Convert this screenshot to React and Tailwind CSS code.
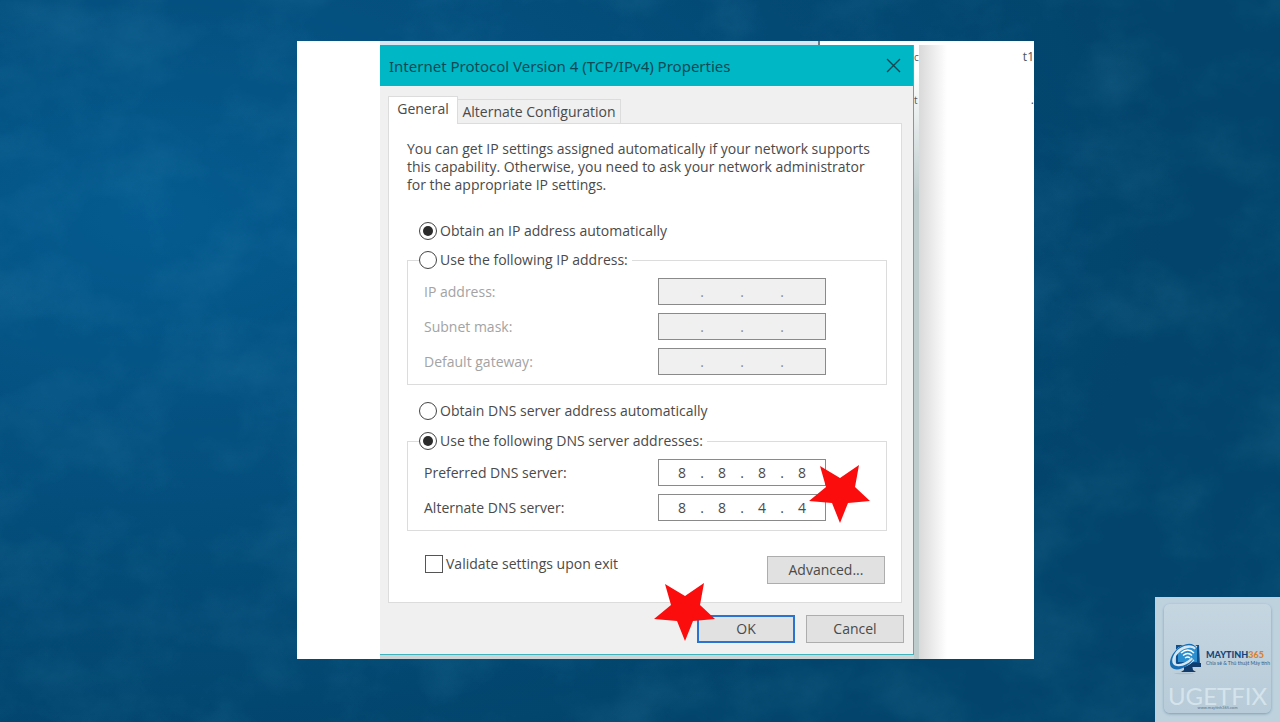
import React, { useState } from 'react';
import clsx from 'clsx';

const IpField = ({ id, value, disabled, onChange }) => (
    <div
        role="group"
        aria-labelledby={`${id}-label`}
        className={clsx(
            "flex items-center w-[168px] h-[27px] pl-2 border border-[#8a8a8a]",
            disabled ? "bg-[#f0f0f0] text-[#8c8c8c]" : "bg-white text-[#4a4a4a]"
        )}
    >
        {value.map((octet, idx) => (
            <React.Fragment key={idx}>
                {idx > 0 && <span className="w-[10px] text-center">.</span>}
                <input
                    id={`${id}-${idx}`}
                    aria-label={`Octet ${idx + 1}`}
                    className="w-[30px] h-5 p-0 text-center bg-transparent outline-none"
                    maxLength={3}
                    disabled={disabled}
                    value={octet}
                    onChange={e => onChange(value.map((o, i) => (i === idx ? e.target.value : o)))}
                />
            </React.Fragment>
        ))}
    </div>
);

const IpRow = ({ id, label, value, disabled, onChange }) => (
    <div className="flex items-center justify-between pl-4 pr-[60px]">
        <label id={`${id}-label`} htmlFor={`${id}-0`} className={disabled ? "text-[#a3a3a3]" : ""}>{label}</label>
        <IpField id={id} value={value} disabled={disabled} onChange={onChange} />
    </div>
);

const RadioOption = ({ name, label, checked, onChange }) => (
    <label className="flex items-center gap-[3px] h-5">
        <input
            type="radio"
            name={name}
            checked={checked}
            onChange={onChange}
            className="grid place-content-center appearance-none w-[18px] h-[18px] rounded-full border border-[#444] bg-white before:w-[10px] before:h-[10px] before:rounded-full checked:before:bg-[#2b2b2b]"
        />
        {label}
    </label>
);

const Star = ({ className }) => (
    <svg className={clsx("absolute w-[61px] h-[58px]", className)} viewBox="0 0 61 58" aria-hidden="true">
        <polygon fill="#fb0d0d" points="11,1 31,13 50,0 46,22 61,36 39,38 31,58 23,38 0,36 17,22" />
    </svg>
);

const Backdrop = () => (
    <svg className="absolute inset-0 -z-10 w-full h-full" aria-hidden="true">
        <defs>
            <radialGradient id="glow" cx="0.12" cy="0.3" r="0.8">
                <stop offset="0" stopColor="#045b8f" />
                <stop offset="0.4" stopColor="#04507f" />
                <stop offset="1" stopColor="#02446b" />
            </radialGradient>
            <filter id="grain" x="0" y="0" width="100%" height="100%">
                <feTurbulence type="fractalNoise" baseFrequency="0.012 0.015" numOctaves="7" seed="8" />
                <feColorMatrix values="0 0 0 0 0.12  0 0 0 0 0.5  0 0 0 0 0.72  0.9 0 0 0 -0.36" />
            </filter>
        </defs>
        <rect width="100%" height="100%" fill="url(#glow)" />
        <rect width="100%" height="100%" filter="url(#grain)" opacity="0.25" />
    </svg>
);

const LogoMark = () => (
    <svg className="w-[35px] h-[34px] shrink-0" viewBox="0 0 35 34" aria-hidden="true">
        <ellipse cx="15" cy="32.5" rx="10" ry="0.7" fill="#a9bcc8" />
        <path d="M15 24h8l1 5 3 2H12l3-2z" fill="#123c6b" />
        <path d="M7 4h23l1 21H7z" fill="#0f4f8d" />
        <path d="M9 6h19v15H9z" fill="#2c8fd0" />
        <path d="M7 22h25v4H7z" fill="#123c6b" />
        <path d="M12 12q7-6 13 0M14 14.500q5-4 9 0M16 17q3-2 5 0" fill="none" stroke="#fff" strokeWidth="1.4" />
        <path d="M27 7C22 2 11 6 6 13c-4 6-3 12 3 12 4 0 10-2 15-7" fill="none" stroke="#d5e6f0" strokeWidth="4" />
        <path d="M28 8C22 1 11 5 6 12c-4 6-4 12 2 13 5 1 12-2 17-8-4 8-14 13-20 11C-2 26 1 15 7 9 14 2 25 0 28 8z" fill="#176db2" />
    </svg>
);

const Watermark = () => (
    <aside className="absolute right-0 bottom-0 w-[125px] h-[125px] p-[9px] pt-[7px] bg-[#bed2de]">
        <div className="flex flex-col h-[109px] rounded-md bg-linear-to-b from-[#c5d6e1] to-[#b7cbd8] shadow-[0_1px_3px_#7f9bae]">
            <div className="flex items-center gap-[2px] pt-[37px] pl-[5px]">
                <LogoMark />
                <div className="font-[Lato,sans-serif] whitespace-nowrap">
                    <div className="text-[9px] leading-[10px] font-black text-[#14457b]">
                        MAYTINH<span className="text-[#d9822b]">365</span>
                    </div>
                    <div className="text-[5px] leading-[6px] text-[#2c5f8d]">Chia sẻ &amp; Thủ thuật Máy tính</div>
                </div>
            </div>
            <div className="mt-auto text-center font-[Lato,sans-serif]">
                <div className="text-[24px] leading-[20px] text-[#d5e4ec]">UGETFIX</div>
                <div className="text-[4px] leading-[4px] pb-[3px] text-[#5d7484]">www.maytinh365.com</div>
            </div>
        </div>
    </aside>
);

const Dialog = () => {
    const [ipMode, setIpMode] = useState('auto');
    const [dnsMode, setDnsMode] = useState('manual');
    const [validate, setValidate] = useState(false);
    const [addresses, setAddresses] = useState({
        ip: ['', '', '', ''],
        mask: ['', '', '', ''],
        gateway: ['', '', '', ''],
        preferred: ['8', '8', '8', '8'],
        alternate: ['8', '8', '4', '4'],
    });

    const rowProps = (key) => ({
        id: key,
        value: addresses[key],
        onChange: (value) => setAddresses({ ...addresses, [key]: value }),
    });

    return (
        <section className="w-[534px] bg-[#f0f0f0] border-r border-b border-r-[#3fb4bd] border-b-[#3fb4bd] text-[14px] leading-[18px] text-[#4a4a4a]">
            <header className="flex items-center justify-between h-[41px] pl-[9px] pr-3 bg-[#00b7c6] text-[#0b4a55]">
                <h1 className="text-[15px] font-['Noto_Sans',sans-serif]">Internet Protocol Version 4 (TCP/IPv4) Properties</h1>
                <button type="button" aria-label="Close">
                    <svg className="w-4 h-4" viewBox="0 0 16 16" fill="none" stroke="currentColor" strokeWidth="1.4">
                        <path d="M2 1l13 13M15 1L2 14" />
                    </svg>
                </button>
            </header>

            <div className="px-2 pt-[10px] pr-[11px]">
                {/* Tabs */}
                <div role="tablist" className="flex items-end">
                    <button type="button" role="tab" aria-selected="true" className="w-[70px] h-7 -mb-px pb-1 bg-white border border-b-0 border-[#dcdcdc]">General</button>
                    <button type="button" role="tab" aria-selected="false" className="w-[163px] h-6 border border-l-0 border-b-0 border-[#dcdcdc]">Alternate Configuration</button>
                </div>

                <div role="tabpanel" className="px-[18px] pr-[14px] pt-4 pb-[18px] bg-white border border-[#dcdcdc]">
                    <p>
                        You can get IP settings assigned automatically if your network supports<br />
                        this capability. Otherwise, you need to ask your network administrator<br />
                        for the appropriate IP settings.
                    </p>

                    <div className="mt-[27px] pl-3">
                        <RadioOption name="ip" label="Obtain an IP address automatically" checked={ipMode === 'auto'} onChange={() => setIpMode('auto')} />
                    </div>
                    <fieldset className="mt-[9px] pb-[9px] border border-[#dcdcdc]">
                        <legend className="ml-[11px] pr-1">
                            <RadioOption name="ip" label="Use the following IP address:" checked={ipMode === 'manual'} onChange={() => setIpMode('manual')} />
                        </legend>
                        <div className="flex flex-col gap-2 pt-2">
                            <IpRow label="IP address:" disabled={ipMode === 'auto'} {...rowProps('ip')} />
                            <IpRow label="Subnet mask:" disabled={ipMode === 'auto'} {...rowProps('mask')} />
                            <IpRow label="Default gateway:" disabled={ipMode === 'auto'} {...rowProps('gateway')} />
                        </div>
                    </fieldset>

                    <div className="mt-4 pl-3">
                        <RadioOption name="dns" label="Obtain DNS server address automatically" checked={dnsMode === 'auto'} onChange={() => setDnsMode('auto')} />
                    </div>
                    <fieldset className="mt-[10px] pb-[9px] border border-[#dcdcdc]">
                        <legend className="ml-[11px] pr-1">
                            <RadioOption name="dns" label="Use the following DNS server addresses:" checked={dnsMode === 'manual'} onChange={() => setDnsMode('manual')} />
                        </legend>
                        <div className="relative flex flex-col gap-2 pt-2">
                            <IpRow label="Preferred DNS server:" disabled={dnsMode === 'auto'} {...rowProps('preferred')} />
                            <IpRow label="Alternate DNS server:" disabled={dnsMode === 'auto'} {...rowProps('alternate')} />
                            <Star className="right-4 top-[14px]" />
                        </div>
                    </fieldset>

                    <div className="flex items-start justify-between mt-[25px] pl-[18px] pr-[2px]">
                        <label className="flex items-center gap-[3px] h-4">
                            <input
                                type="checkbox"
                                checked={validate}
                                onChange={e => setValidate(e.target.checked)}
                                className="appearance-none w-[18px] h-[18px] border border-[#555] bg-white checked:bg-[#2b2b2b]"
                            />
                            Validate settings upon exit
                        </label>
                        <button type="button" className="w-[118px] h-7 bg-[#e1e1e1] border border-[#adadad]">Advanced...</button>
                    </div>
                </div>
            </div>

            <footer className="flex justify-end gap-[11px] pt-3 pb-[11px] pr-[9px]">
                <div className="relative">
                    <button type="button" className="w-[98px] h-7 bg-[#e1e1e1] border-2 border-[#2a73cf]">OK</button>
                    <Star className="-left-[43px] -top-8" />
                </div>
                <button type="button" className="w-[98px] h-7 bg-[#e1e1e1] border border-[#adadad]">Cancel</button>
            </footer>
        </section>
    );
};

const App = () => (
    <main className="relative isolate flex justify-center items-start min-h-screen pt-[41px] pl-[51px] overflow-hidden bg-[#04507f] font-['Open_Sans',sans-serif]">
        <Backdrop />
        <div className="flex w-full max-w-[737px] pl-[83px] bg-white text-[14px] leading-[18px] text-[#4a5560]">
            <div className="flex flex-col">
                <div className="w-[440px] h-1 bg-[#d9e5f0] border-r-2 border-[#6b7c86]" />
                <Dialog />
                <div className="h-1 bg-[#cbd3d4]" />
            </div>
            {/* Edge of the window behind the dialog */}
            <div className="flex flex-col gap-[25px] w-[5px] pt-[7px] text-[10px] leading-[18px] bg-linear-to-b from-white from-5% to-[#bfcccd] to-25%">
                <span>c</span>
                <span>t</span>
            </div>
            <div className="w-7 mt-1 bg-linear-to-r from-[#d9d9d9] to-white" />
            <div className="flex flex-col gap-[25px] ml-auto w-3 pt-[7px] text-[12px] leading-[18px] text-right">
                <span>t1</span>
                <span>.</span>
            </div>
        </div>
        <Watermark />
    </main>
);

export default App;
